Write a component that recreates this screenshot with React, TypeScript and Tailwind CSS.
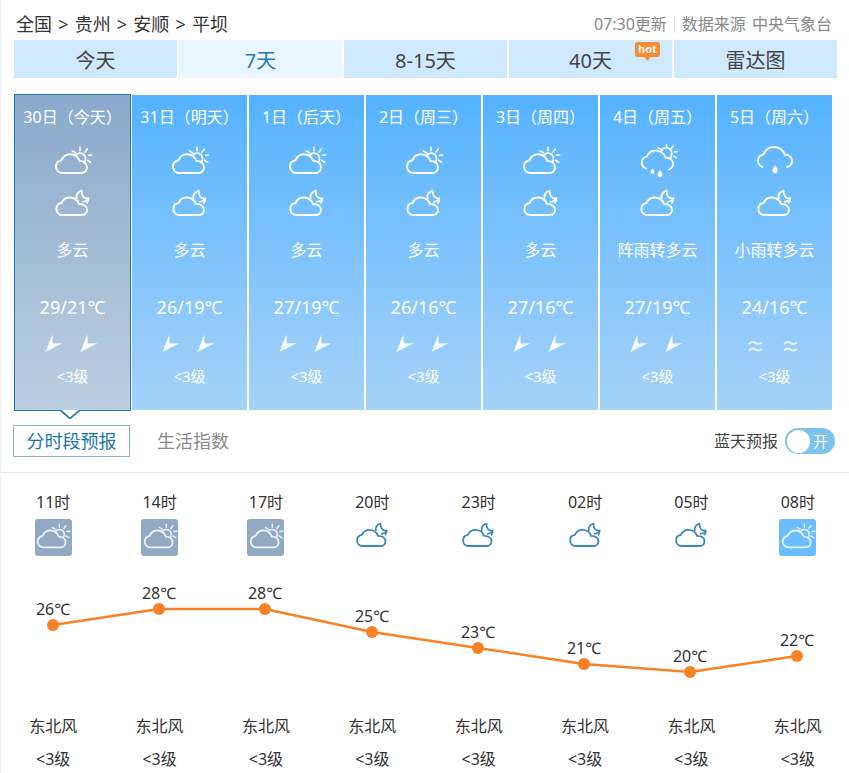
import React from "react";

const FONT = "font-['Noto_Sans','Noto_Sans_CJK_SC',sans-serif]";

type IconProps = { color?: string; width?: number; height?: number };

// cloud with sun, the day icon
function CloudSun({ color = "#fff", width = 40, height = 32 }: IconProps) {
  return (
    <svg width={width} height={height} viewBox="-1 0 40 32" fill="none" stroke={color} strokeLinecap="round" strokeLinejoin="round">
      <path strokeWidth="2" d="M8.5 27C4.5 27 2 24 2 20.8C2 17.3 4.5 14.8 7.5 14.2C9 10.5 12.5 8.2 16 8.2C20.5 8.2 24 11 25.5 15C29.8 15 33 17.5 33 21.5C33 24.6 30.5 27 27.5 27Z" />
      <path strokeWidth="1.7" d="M21.5 9.5A5.5 5.5 0 0 1 31.5 12.5C31.5 14.5 31 15.5 30.3 16.3" />
      <path strokeWidth="1.6" d="M18.3 5L21.5 6.7M26 1.3V4.7M33.3 3L31 6M37.7 9L34.5 9.3M36.7 16.3L33.5 14.2" />
    </svg>
  );
}

// cloud with a crescent, the night icon
function CloudMoon({ color = "#fff", width = 40, height = 32 }: IconProps) {
  return (
    <svg width={width} height={height} viewBox="-1 0 40 32" fill="none" stroke={color} strokeLinecap="round" strokeLinejoin="round">
      <path strokeWidth="2" d="M8.5 29C4.5 29 2.4 26 2.4 23C2.4 20 4.5 17.5 7.5 17C9 13.5 12.5 11.5 15.5 11.5C20 11.5 23.5 14 25 18C29.5 18 33 20.2 33 24C33 27 30.5 29 27.5 29Z" />
      <path strokeWidth="1.8" d="M22.5 12.5C22 8.8 24 6 27.7 4.7C27.2 9.5 30 13 34.3 12.3C33.2 14.4 31 15.6 28.8 15.8" />
      <path strokeWidth="1.7" d="M34.3 12.3C34.5 14 34 15.5 33 16.8" />
    </svg>
  );
}

function RainSun() {
  return (
    <svg width={40} height={36} viewBox="-2 0 40 36" fill="none" stroke="#fff" strokeLinecap="round" strokeLinejoin="round">
      <path strokeWidth="1.8" d="M6 24.5C3 23 1.6 20.5 1.8 18C2 15 4 13 7 12.3C9 8.5 12.5 6.5 15.5 6.5C20 6.5 24 9.5 25.5 13.5C30 13.5 33 16.5 33 20C33 22.5 31.5 24.5 29 25.5" />
      <path strokeWidth="1.6" d="M21 7.5A5.5 5.5 0 0 1 31.5 11C31.5 12.8 31 14 30.3 15" />
      <path strokeWidth="1.5" d="M18 3.8L21 5.3M26.5 0.8V3.8M33 2L31 5M37.5 7.5L34.5 8M36.5 14L33.8 12.2" />
      <path fill="#fff" stroke="none" d="M12.5 24.5C13.5 26 14.5 27 14.5 28C14.5 29.2 13.6 30 12.5 30C11.4 30 10.5 29.2 10.5 28C10.5 27 11.5 26 12.5 24.5Z" />
      <path fill="#fff" stroke="none" d="M20 26C21.2 28 22.5 29.3 22.5 30.8C22.5 32.3 21.4 33.3 20 33.3C18.6 33.3 17.5 32.3 17.5 30.8C17.5 29.3 18.8 28 20 26Z" />
    </svg>
  );
}

function RainCloud() {
  return (
    <svg width={40} height={36} viewBox="-1 1 40 36" fill="none" stroke="#fff" strokeLinecap="round" strokeLinejoin="round">
      <path strokeWidth="1.8" d="M6.5 24C3.5 22.8 1.8 20.2 2 17.5C2.2 14.5 4.5 12 7.5 11.5C9.5 6.5 14 4 18 4C23 4 27 7 28.8 11.5C32.5 11.5 36 14 36 18C36 21 34 23.3 31 24" />
      <path fill="#fff" stroke="none" d="M19 22C20.2 24.2 21.6 25.5 21.6 27.3C21.6 29 20.5 30.2 19 30.2C17.5 30.2 16.4 29 16.4 27.3C16.4 25.5 17.8 24.2 19 22Z" />
    </svg>
  );
}

function WindArrow() {
  return (
    <svg width={20} height={20} viewBox="0 0 20 20" className="blur-[0.5px]">
      <path fill="#fff" fillOpacity="0.92" d="M7.3 0.5L0.5 18L17.5 9.3L7.7 9.5Z" />
    </svg>
  );
}

function WindWave() {
  return (
    <svg width={20} height={20} viewBox="0 0 20 20" fill="none" stroke="#fff" strokeOpacity="0.75" strokeWidth="2">
      <path d="M2 10C4.5 7.5 6.5 7.5 8.5 9C10.5 10.5 12.5 10.5 15 8.5" />
      <path d="M2 16.5C4.5 14 6.5 14 8.5 15.5C10.5 17 12.5 17 15 15" />
    </svg>
  );
}

const navTabs = ["今天", "7天", "8-15天", "40天", "雷达图"];

const days = [
  { title: "30日（今天）", top: "sun", text: "多云", temp: "29/21℃", wave: false },
  { title: "31日（明天）", top: "sun", text: "多云", temp: "26/19℃", wave: false },
  { title: "1日（后天）", top: "sun", text: "多云", temp: "27/19℃", wave: false },
  { title: "2日（周三）", top: "sun", text: "多云", temp: "26/16℃", wave: false },
  { title: "3日（周四）", top: "sun", text: "多云", temp: "27/16℃", wave: false },
  { title: "4日（周五）", top: "rainsun", text: "阵雨转多云", temp: "27/19℃", wave: false },
  { title: "5日（周六）", top: "rain", text: "小雨转多云", temp: "24/16℃", wave: true },
];

const hours = [
  { time: "11时", icon: "past" },
  { time: "14时", icon: "past" },
  { time: "17时", icon: "past" },
  { time: "20时", icon: "night" },
  { time: "23时", icon: "night" },
  { time: "02时", icon: "night" },
  { time: "05时", icon: "night" },
  { time: "08时", icon: "day" },
];

const points = [
  { x: 53, y: 55, t: "26℃" },
  { x: 159, y: 39, t: "28℃" },
  { x: 265, y: 39, t: "28℃" },
  { x: 372, y: 62, t: "25℃" },
  { x: 478, y: 78, t: "23℃" },
  { x: 584, y: 94, t: "21℃" },
  { x: 690, y: 102, t: "20℃" },
  { x: 797, y: 86, t: "22℃" },
];

function DayCard({ day, active }: { day: (typeof days)[number]; active: boolean }) {
  return (
    <div
      className={
        active
          ? "relative flex h-[315px] w-[115px] flex-col items-center bg-gradient-to-b from-[#8aa9cb] to-[#bdd0e2] text-white outline outline-1 outline-[#1a7cb2]"
          : "flex h-[315px] w-[115px] flex-col items-center bg-gradient-to-b from-[#53b2ff] to-[#a5d3f8] text-white"
      }
    >
      <div className="flex h-[44px] items-center text-[16px]">{day.title}</div>
      <div className="mt-[7px] flex h-[32px] items-center justify-center">
        {day.top === "sun" && <CloudSun />}
        {day.top === "rainsun" && <RainSun />}
        {day.top === "rain" && <RainCloud />}
      </div>
      <div className="mt-[8px]">
        <CloudMoon />
      </div>
      <div className="mt-[20px] flex h-[24px] items-center text-[16px]">{day.text}</div>
      <div className="mt-[31px] flex h-[28px] items-center text-[18px]">{day.temp}</div>
      <div className="mt-[13px] flex h-[20px] items-center gap-[15px]">
        {day.wave ? (
          <>
            <WindWave />
            <WindWave />
          </>
        ) : (
          <>
            <WindArrow />
            <WindArrow />
          </>
        )}
      </div>
      <div className="mt-[12px] flex h-[20px] items-center text-[15px]">&lt;3级</div>
      {active && (
        <svg width="20" height="9" viewBox="0 0 20 9" className="absolute -bottom-[9px] left-[45px]">
          <path d="M0 0L10 8.5L20 0" fill="#fff" stroke="#3d86b4" strokeWidth="2" />
        </svg>
      )}
    </div>
  );
}

function HourIcon({ kind }: { kind: string }) {
  if (kind === "night") {
    return (
      <div className="flex h-[37px] w-[37px] items-start justify-center">
        <CloudMoon color="#3b88b8" width={37} height={30} />
      </div>
    );
  }
  return (
    <div
      className={
        kind === "past"
          ? "flex h-[37px] w-[37px] items-center justify-center rounded-[3px] bg-[#91a9c2]"
          : "flex h-[37px] w-[37px] items-center justify-center rounded-[3px] bg-[#69bcff]"
      }
    >
      <CloudSun color="#e9f2fa" width={36} height={29} />
    </div>
  );
}

export default function App() {
  return (
    <div className={`${FONT} h-[773px] w-[849px] overflow-hidden border-l border-[#eeeeff] bg-white`}>
      <div className="-ml-px">
        {/* breadcrumb */}
        <div className="flex h-[40px] items-center justify-between pl-[16px] pr-[17px] pt-[8px]">
          <div className="text-[18px] text-[#333] [word-spacing:1.5px]">全国 &gt; 贵州 &gt; 安顺 &gt; 平坝</div>
          <div className="flex items-center text-[16px] text-[#888]">
            <span>07:30更新</span>
            <span className="mx-[7px] h-[17px] w-px bg-[#ddd]" />
            <span className="[word-spacing:2px]">数据来源 中央气象台</span>
          </div>
        </div>

        {/* nav tabs */}
        <div className="ml-[14px] flex gap-[2px]">
          {navTabs.map((t, i) => (
            <div
              key={t}
              className={
                i === 1
                  ? "relative flex h-[38px] w-[163px] items-center justify-center bg-[#e9f6ff] pt-[4px] text-[20px] text-[#2a78b8]"
                  : "relative flex h-[38px] w-[163px] items-center justify-center bg-[#cfe9fe] pt-[4px] text-[20px] text-[#444]"
              }
            >
              {t}
              {i === 3 && (
                <div className="absolute left-[126px] top-[2px] flex h-[15px] w-[25px] items-center justify-center rounded-[3px] bg-[#f68b2f] text-[11px] font-bold text-white">
                  hot
                  <span className="absolute -bottom-[4px] left-[9px] h-0 w-0 border-l-[4px] border-r-[2px] border-t-[4px] border-l-transparent border-r-transparent border-t-[#f68b2f]" />
                </div>
              )}
            </div>
          ))}
        </div>

        {/* 7 day cards */}
        <div className="ml-[15px] mt-[17px] flex gap-[2px]">
          {days.map((d, i) => (
            <DayCard key={d.title} day={d} active={i === 0} />
          ))}
        </div>

        {/* sub tabs */}
        <div className="mt-[15px] flex h-[32px] items-center pl-[13px] pr-[14px]">
          <div className="flex h-[32px] w-[117px] items-center justify-center border border-[#8fb0c8] text-[18px] text-[#1b77a9]">
            分时段预报
          </div>
          <div className="ml-[27px] text-[18px] text-[#8a8a8a]">生活指数</div>
          <div className="ml-auto flex items-center">
            <span className="text-[16px] text-[#444]">蓝天预报</span>
            <div className="ml-[7px] flex h-[26px] w-[50px] items-center rounded-full bg-[#7cc4ed] pl-[2px]">
              <span className="h-[23px] w-[23px] rounded-full bg-white" />
              <span className="ml-[3px] text-[15px] text-white">开</span>
            </div>
          </div>
        </div>

        <div className="mt-[15px] h-px bg-[#e8e8e8]" />

        {/* hourly forecast */}
        <div className="mt-[17px] grid w-[851px] grid-cols-8 text-[#333]">
          {hours.map((h, i) => (
            <div key={i} className="flex flex-col items-center">
              <div className="flex h-[24px] items-center text-[16px]">{h.time}</div>
              <div className="mt-[5px]">
                <HourIcon kind={h.icon} />
              </div>
            </div>
          ))}
        </div>

        <svg width="849" height="130" viewBox="0 0 849 130" className="mt-[14px] block">
          <polyline points={points.map((p) => `${p.x},${p.y}`).join(" ")} fill="none" stroke="#f98125" strokeWidth="2.5" />
          {points.map((p) => (
            <g key={p.x}>
              <circle cx={p.x} cy={p.y} r="6" fill="#f98125" />
              <text x={p.x} y={p.y - 10} textAnchor="middle" fontSize="16" fill="#333">
                {p.t}
              </text>
            </g>
          ))}
        </svg>

        <div className="grid w-[851px] grid-cols-8 text-[#333]">
          {hours.map((h) => (
            <div key={h.time} className="flex flex-col items-center">
              <div className="mt-[14px] flex h-[24px] items-center text-[16px]">东北风</div>
              <div className="mt-[9px] flex h-[24px] items-center text-[16px]">&lt;3级</div>
            </div>
          ))}
        </div>
      </div>
    </div>
  );
}
